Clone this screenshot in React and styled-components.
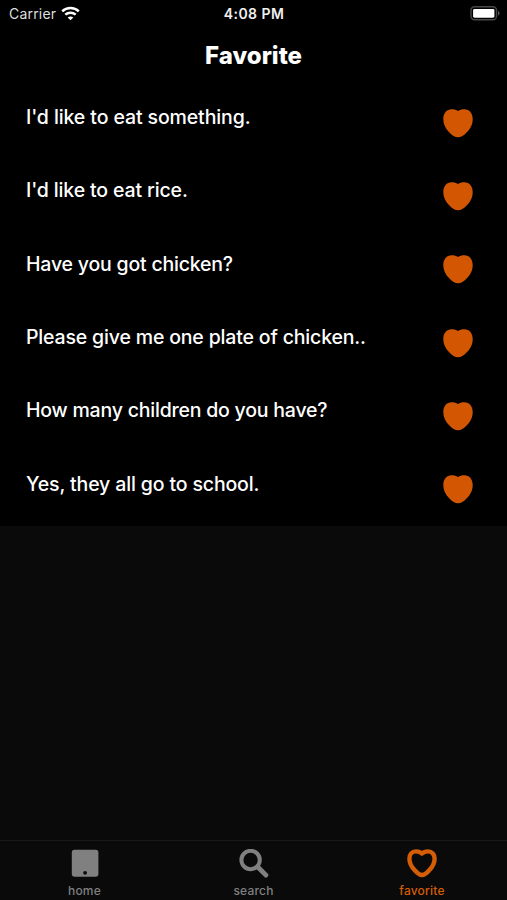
import React from "react";
import styled, { createGlobalStyle } from "styled-components";

const GlobalStyle = createGlobalStyle`
  * { box-sizing: border-box; }
  body { margin: 0; background: #0a0a0a; }
`;

const Screen = styled.main`
  display: flex;
  flex-direction: column;
  width: 507px;
  height: 900px;
  overflow: hidden;
  background: #0a0a0a;
  color: #fff;
  font-family: Inter, "Liberation Sans", sans-serif;
`;

const StatusBar = styled.div`
  display: grid;
  grid-template-columns: 1fr auto 1fr;
  align-items: center;
  height: 27px;
  padding: 0 7px 0 9px;
  background: #000;
  font-size: 14px;
  line-height: 27px;
`;

const Carrier = styled.div`
  display: flex;
  align-items: center;
  gap: 5px;
  color: #dedede;
  letter-spacing: 0.2px;
`;

const Clock = styled.time`
  margin-right: 1px;
  font-size: 14px;
  font-weight: 600;
  letter-spacing: 0.45px;
  color: #f0f0f0;
`;

const BatterySlot = styled.div`
  display: flex;
  justify-content: flex-end;
`;

const Header = styled.header`
  display: flex;
  align-items: center;
  justify-content: center;
  height: 59px;
  background: #000;
`;

const Title = styled.h1`
  margin: 0;
  padding-bottom: 1px;
  font-size: 24px;
  line-height: 56px;
  font-weight: 800;
  letter-spacing: 0;
`;

const List = styled.ul`
  display: grid;
  grid-template-rows: repeat(6, 1fr);
  height: 440px;
  margin: 0;
  padding: 0;
  list-style: none;
  background: #000;
`;

const Row = styled.li`
  display: flex;
  align-items: center;
  justify-content: space-between;
  padding: 1px 34px 0 26px;
`;

const Phrase = styled.span`
  padding-bottom: 12px;
  font-size: 19.5px;
  line-height: 26px;
  font-weight: 500;
  letter-spacing: ${({ $tracking }) => $tracking}px;
  white-space: nowrap;
  color: #fff;
`;

const TabBar = styled.nav`
  display: grid;
  grid-template-columns: repeat(3, 1fr);
  height: 60px;
  margin-top: auto;
  border-top: 1px solid #191919;
  background: #0a0a0a;
`;

const Tab = styled.a`
  display: flex;
  flex-direction: column;
  align-items: center;
  padding-top: 8px;
  padding-right: ${({ $active }) => ($active ? "1px" : "0")};
  color: ${({ $active }) => ($active ? "#d55d05" : "#808080")};
`;

const TabLabel = styled.span`
  margin-top: 5px;
  font-size: 12px;
  line-height: 16px;
  font-weight: 500;
  letter-spacing: ${({ $tracking }) => $tracking}px;
`;

const phrases = [
  ["I'd like to eat something.", -0.11],
  ["I'd like to eat rice.", -0.14],
  ["Have you got chicken?", -0.2],
  ["Please give me one plate of chicken..", -0.17],
  ["How many children do you have?", -0.21],
  ["Yes, they all go to school.", -0.14],
];

function WifiIcon() {
  return (
    <svg width="19" height="15" viewBox="0 0 19 15" fill="none" stroke="#fff" strokeWidth="2.5">
      <path d="M1.2 5.3C5.8 .9 13.2 .9 17.8 5.3" />
      <path d="M4.3 8.7c2.9-2.7 7.5-2.7 10.4 0" />
      <path d="M9.5 14.3 6.7 11.5c1.5-1.5 4.1-1.5 5.6 0z" fill="#fff" stroke="none" />
    </svg>
  );
}

function BatteryIcon() {
  return (
    <svg width="30" height="15" viewBox="0 0 30 15">
      <rect x="1" y=".8" width="25.5" height="13" rx="3.5" fill="none" stroke="#484848" strokeWidth="1.4" />
      <rect x="3.1" y="2.9" width="21.3" height="8.8" rx="1.4" fill="#fff" />
      <path d="M28 5.1c2 .5 2 4 0 4.5z" fill="#555" />
    </svg>
  );
}

function HeartIcon({ outlined }) {
  return outlined ? (
    <svg width="30" height="29" viewBox="0 0 30 29" fill="none" stroke="currentColor" strokeWidth="4.4" strokeLinejoin="round">
      <path d="M15 4.6C13.5 3 11.3 2.4 9 2.4C4.9 2.4 2.4 5.4 2.4 9.7C2.4 14.5 4.6 18 7.8 21.3C10.2 24.1 12.4 26 15 26S19.8 24.1 22.2 21.3C25.4 18 27.6 14.5 27.6 9.7C27.6 5.4 25.1 2.4 21 2.4C18.7 2.4 16.5 3 15 4.6Z" />
    </svg>
  ) : (
    <svg width="30" height="29" viewBox="0 0 30 29" fill="#d35702">
      <path d="M15 1.9C13.3.7 11.2.2 8.7.2C3.5.2.3 4.2.3 9.9C.3 15.4 2.6 19.6 6.2 23.3C9.3 26.5 11.9 28.3 15 28.3S20.7 26.5 23.8 23.3C27.4 19.6 29.7 15.4 29.7 9.9C29.7 4.2 26.5.2 21.3.2C18.8.2 16.7.7 15 1.9Z" />
    </svg>
  );
}

function HomeIcon() {
  return (
    <svg width="30" height="29" viewBox="0 0 30 29">
      <rect x="1.8" y=".8" width="26.6" height="27" rx="2.8" fill="currentColor" />
      <circle cx="15.1" cy="23.8" r="1.9" fill="#0a0a0a" />
    </svg>
  );
}

function SearchIcon() {
  return (
    <svg width="30" height="29" viewBox="0 0 30 29" fill="none" stroke="currentColor">
      <circle cx="11.6" cy="11" r="9.2" strokeWidth="4" />
      <path d="m18.8 18 8.1 8.1" strokeWidth="4.8" strokeLinecap="round" />
    </svg>
  );
}

export default function App() {
  return (
    <>
      <GlobalStyle />
      <Screen>
        <StatusBar>
          <Carrier>Carrier <WifiIcon /></Carrier>
          <Clock>4:08 PM</Clock>
          <BatterySlot><BatteryIcon /></BatterySlot>
        </StatusBar>
        <Header><Title>Favorite</Title></Header>
        <List>
          {phrases.map(([text, tracking]) => (
            <Row key={text}>
              <Phrase $tracking={tracking}>{text}</Phrase>
              <HeartIcon />
            </Row>
          ))}
        </List>
        <TabBar>
          <Tab><HomeIcon /><TabLabel $tracking={0.2}>home</TabLabel></Tab>
          <Tab><SearchIcon /><TabLabel $tracking={0.2}>search</TabLabel></Tab>
          <Tab $active><HeartIcon outlined /><TabLabel $tracking={0.2}>favorite</TabLabel></Tab>
        </TabBar>
      </Screen>
    </>
  );
}
